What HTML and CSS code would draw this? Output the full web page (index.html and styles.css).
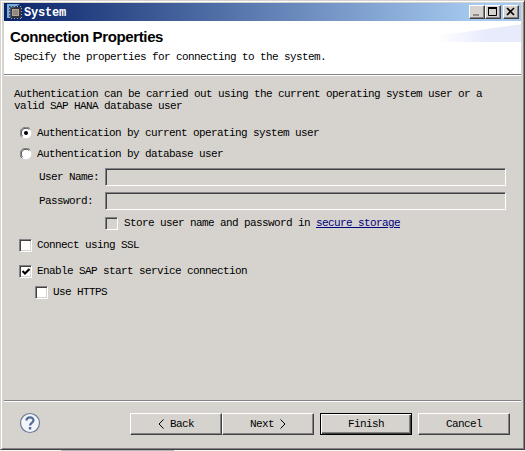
FILE: index.html
```html
<!DOCTYPE html>
<html lang="en">
<head>
<meta charset="utf-8">
<title>System</title>
<link rel="stylesheet" href="styles.css">
</head>
<body>
<div class="window">
  <header class="titlebar">
    <svg class="app-icon" width="16" height="16" viewBox="0 0 16 16">
      <path d="M0 0H13L5 5V14H0Z" fill="#76aedb"/>
      <path d="M2 2H13V14H2Z" fill="#253956" opacity=".7"/>
      <path d="M4.5 2V16M7.5 2V16M10.5 2V16M13.5 2V16M2 4.5H16M2 7.5H16M2 10.5H16M2 13.5H16" stroke="#b5aa98" stroke-dasharray="1 1"/>
      <rect x="4" y="4" width="10" height="10" fill="#34353b"/>
      <rect x="5" y="5" width="7" height="7" fill="#b5a496"/>
      <rect x="6" y="6" width="5" height="5" fill="#938780"/>
    </svg>
    <h1 class="title">System</h1>
    <div class="controls">
      <button class="control" aria-label="Minimize"><svg width="14" height="12"><path d="M3 9H9" stroke="#8c8c8c" stroke-width="2"/></svg></button>
      <button class="control" aria-label="Maximize"><svg width="14" height="12"><path d="M2.5 2V9.5H10.5V2M2 2H11" fill="none" stroke="#000"/><path d="M2 2H11" stroke="#000" stroke-width="2"/></svg></button>
      <button class="control close" aria-label="Close"><svg width="14" height="12"><path d="M3 2L10 9M10 2L3 9" stroke="#000" stroke-width="1.6"/></svg></button>
    </div>
  </header>
  <section class="banner">
    <h2 class="heading">Connection Properties</h2>
    <p class="subtitle">Specify the properties for connecting to the system.</p>
    <div class="glow"></div>
  </section>
  <main class="content">
    <p class="intro">Authentication can be carried out using the current operating system user or a<br>valid SAP HANA database user</p>
    <div class="row row-os">
      <svg class="radio" width="12" height="12"><circle cx="6" cy="6" r="5.3" fill="#fff"/><path d="M1.8 10.2A5.5 5.5 0 0 1 10.2 1.8" fill="none" stroke="#777"/><path d="M2.6 9.2A4.5 4.5 0 0 1 9.2 2.6" fill="none" stroke="#444"/><circle cx="6" cy="6" r="2" fill="#000"/></svg>
      <span>Authentication by current operating system user</span>
    </div>
    <div class="row row-db">
      <svg class="radio" width="12" height="12"><circle cx="6" cy="6" r="5.3" fill="#fff"/><path d="M1.8 10.2A5.5 5.5 0 0 1 10.2 1.8" fill="none" stroke="#777"/><path d="M2.6 9.2A4.5 4.5 0 0 1 9.2 2.6" fill="none" stroke="#444"/></svg>
      <span>Authentication by database user</span>
    </div>
    <div class="fields">
      <span>User Name:</span><div class="field"></div>
      <span>Password:</span><div class="field"></div>
    </div>
    <div class="row row-store"><span class="check disabled"></span><span>Store user name and password in <a class="link">secure storage</a></span></div>
    <div class="row row-ssl"><span class="check"></span><span>Connect using SSL</span></div>
    <div class="row row-service"><span class="check"><svg width="9" height="9"><path d="M1.5 4L4 6.5L8.5 2" fill="none" stroke="#000" stroke-width="2.2"/></svg></span><span>Enable SAP start service connection</span></div>
    <div class="row row-https"><span class="check"></span><span>Use HTTPS</span></div>
  </main>
  <footer class="footer">
    <svg class="help" width="22" height="22" viewBox="0 0 22 22">
      <circle cx="11" cy="11" r="9.5" fill="#f3f5fa" stroke="#6b7c98" stroke-width="1.2"/>
      <path d="M7.5 8.6C7.5 4.2 14.5 4.3 14.5 8.3C14.5 11 11 10.8 11 13.6" fill="none" stroke="#526d97" stroke-width="2.3"/>
      <rect x="9.8" y="15" width="2.5" height="2.5" fill="#526d97"/>
    </svg>
    <div class="pair">
      <button class="button"><svg width="6" height="10"><path d="M5.5 .5L1 5L5.5 9.5" fill="none" stroke="#000"/></svg>Back</button>
      <button class="button">Next<svg width="6" height="10"><path d="M.5 .5L5 5L.5 9.5" fill="none" stroke="#000"/></svg></button>
    </div>
    <button class="button primary">Finish</button>
    <button class="button">Cancel</button>
  </footer>
</div>
<div class="behind"></div>
</body>
</html>
```
FILE: styles.css
```css
* { box-sizing: border-box; }
body {
  margin: 0;
  width: 525px;
  height: 451px;
  overflow: hidden;
  background: #f5f4f2;
  color: #000;
  font: 11px/12px "Liberation Mono", monospace;
  letter-spacing: -0.601px;
}
h1, h2, p { margin: 0; }
svg { display: block; flex: none; }
button { margin: 0; padding: 0; font: inherit; letter-spacing: inherit; color: inherit; }
.window {
  width: 525px;
  height: 450px;
  display: flex;
  flex-direction: column;
  padding: 2px 2px 0 2px;
  background: #d6d3ce;
  border: 1px solid;
  border-color: #d6d3ce #424142 #424142 #d6d3ce;
  box-shadow: inset 1px 1px #fff, inset -1px -1px #848284;
}
.titlebar {
  height: 18px;
  margin: 0 1px;
  padding: 0 2px 0 3px;
  display: flex;
  align-items: center;
  background: linear-gradient(90deg, #0a246a, #a6caf0 92%);
}
.title {
  margin: 1px 0 0 1px;
  color: #fff;
  font: bold 12px/16px "Liberation Mono", monospace;
  letter-spacing: -0.2px;
}
.controls { margin-left: auto; display: flex; }
.control {
  width: 16px;
  height: 14px;
  background: #d6d3ce;
  border: 1px solid;
  border-color: #fff #424142 #424142 #fff;
  box-shadow: inset -1px -1px #848284;
}
.close { margin-left: 2px; }
.banner {
  position: relative;
  height: 54px;
  margin: 0 1px;
  padding: 7px 6px 0;
  background: #fff;
  border-bottom: 1px solid #848284;
  box-shadow: 0 1px #fff;
}
.heading {
  font: bold 15px/17px "Liberation Sans", sans-serif;
  letter-spacing: -0.37px;
}
.subtitle { margin: 6px 0 0 4px; }
.glow {
  position: absolute;
  top: 0;
  right: 0;
  width: 84px;
  height: 21px;
  background: linear-gradient(90deg, #fff, #e8ebfc 60%);
  clip-path: polygon(0 70%, 100% 15%, 100% 100%, 0 100%);
}
.content { flex: 1; padding: 13px 16px 0 11px; }
.row { display: flex; align-items: center; height: 14px; gap: 5px; }
.row-os { margin: 14px 0 0 6px; }
.row-db { margin: 7px 0 0 6px; }
.fields {
  display: grid;
  grid-template-columns: 66px 1fr;
  grid-auto-rows: 18px;
  row-gap: 6px;
  align-items: center;
  margin: 7px 0 0 25px;
}
.field {
  height: 18px;
  border: 1px solid;
  border-color: #848284 #fff #fff #848284;
  box-shadow: inset 1px 1px #424142;
}
.row-store { margin: 6px 0 0 91px; gap: 6px; }
.row-ssl { margin: 8px 0 0 5px; }
.row-service { margin: 12px 0 0 5px; }
.row-https { margin: 7px 0 0 21px; }
.check {
  width: 13px;
  height: 13px;
  padding: 1px;
  background: #fff;
  border: 1px solid;
  border-color: #848284 #fff #fff #848284;
  box-shadow: inset 1px 1px #424142, inset -1px -1px #d6d3ce;
}
.disabled { background: #d6d3ce; }
.link { color: #000080; text-decoration: underline; }
.footer {
  height: 49px;
  margin: 0 1px;
  padding: 12px 11px 0 15px;
  display: flex;
  gap: 6px;
  border-top: 1px solid #848284;
  box-shadow: inset 0 1px #fff;
}
.help { margin-right: auto; margin-top: -1px; }
.pair { display: flex; }
.button {
  width: 92px;
  height: 22px;
  display: flex;
  align-items: center;
  justify-content: center;
  gap: 6px;
  background: #d6d3ce;
  border: 1px solid;
  border-color: #fff #424142 #424142 #fff;
  box-shadow: inset -1px -1px #848284;
}
.primary {
  border-color: #000;
  box-shadow: inset 1px 1px #fff, inset -1px -1px #424142, inset -2px -2px #848284;
}
.behind { width: 113px; height: 1px; margin-left: 61px; background: #b5b4bd; }
```
